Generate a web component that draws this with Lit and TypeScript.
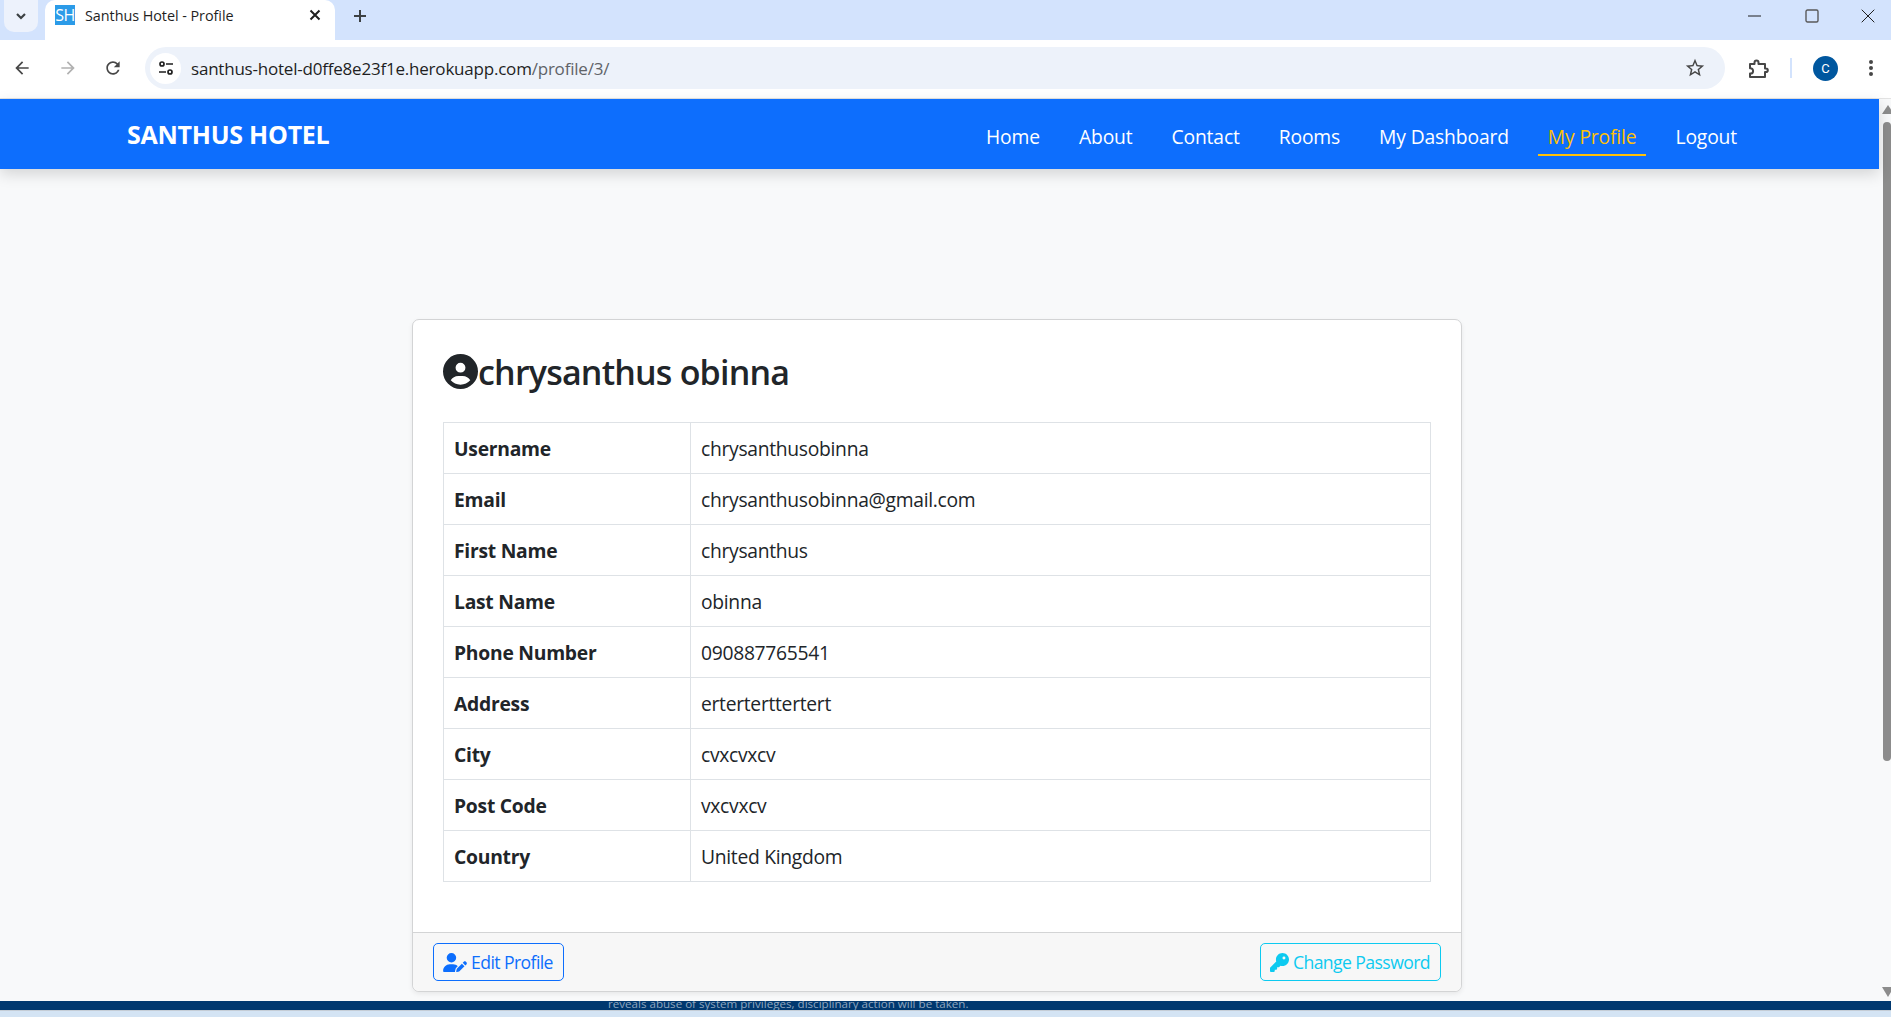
import { LitElement, css, html, svg } from "lit";
import { customElement } from "lit/decorators.js";

const icon = (viewBox: string, d: string, cls: string) =>
  html`<svg class=${cls} viewBox=${viewBox} fill="currentColor">${svg`<path d=${d}></path>`}</svg>`;

const ARROW = "M20 11H7.83l5.59-5.59L12 4l-8 8 8 8 1.41-1.41L7.83 13H20v-2z";
const RELOAD =
  "M17.65 6.35C16.2 4.9 14.21 4 12 4c-4.42 0-7.99 3.58-7.99 8s3.57 8 7.99 8c3.73 0 6.84-2.55 7.73-6h-2.08c-.82 2.33-3.04 4-5.65 4-3.31 0-6-2.69-6-6s2.69-6 6-6c1.66 0 3.14.69 4.22 1.78L13 11h7V4l-2.35 2.35z";
const STAR =
  "M22 9.24l-7.19-.62L12 2 9.19 8.63 2 9.24l5.46 4.73L5.82 21 12 17.27 18.18 21l-1.63-7.03L22 9.24zM12 15.4l-3.76 2.27 1-4.28-3.32-2.88 4.38-.38L12 6.1l1.71 4.04 4.38.38-3.32 2.88 1 4.28L12 15.4z";
const CIRCLE_USER =
  "M399 384.2C376.9 345.8 335.4 320 288 320H224c-47.4 0-88.9 25.8-111 64.2c35.2 39.2 86.2 63.8 143 63.8s107.8-24.7 143-63.8zM0 256a256 256 0 1 1 512 0A256 256 0 1 1 0 256zm256 16a72 72 0 1 0 0-144 72 72 0 1 0 0 144z";
const USER_PEN =
  "M224 256A128 128 0 1 0 224 0a128 128 0 1 0 0 256zm-45.7 48C79.8 304 0 383.8 0 482.3C0 498.7 13.3 512 29.7 512H322.8c-3.1-8.8-3.7-18.4-1.4-27.8l15-60.1c2.8-11.3 8.6-21.5 16.8-29.7l40.3-40.3c-32.1-31-75.7-50.1-123.9-50.1H178.3zm435.5-68.3c-15.6-15.6-40.9-15.6-56.6 0l-29.4 29.4 71 71 29.4-29.4c15.6-15.6 15.6-40.9 0-56.6l-14.4-14.4zM375.9 417c-4.1 4.1-7 9.2-8.4 14.9l-15 60.1c-1.4 5.5 .2 11.2 4.2 15.2s9.7 5.6 15.2 4.2l60.1-15c5.6-1.4 10.8-4.3 14.9-8.4L576.1 358.7l-71-71L375.9 417z";
const KEY =
  "M336 352c97.2 0 176-78.8 176-176S433.2 0 336 0S160 78.8 160 176c0 18.7 2.9 36.8 8.3 53.7L7 391c-4.5 4.5-7 10.6-7 17v80c0 13.3 10.7 24 24 24h80c13.3 0 24-10.7 24-24V448h40c13.3 0 24-10.7 24-24V384h40c6.4 0 12.5-2.5 17-7l33.3-33.3c16.9 5.4 35 8.3 53.7 8.3zM376 96a40 40 0 1 1 0 80 40 40 0 1 1 0-80z";

const NAV = ["Home", "About", "Contact", "Rooms", "My Dashboard", "My Profile", "Logout"];
const ROWS: [string, string][] = [
  ["Username", "chrysanthusobinna"],
  ["Email", "chrysanthusobinna@gmail.com"],
  ["First Name", "chrysanthus"],
  ["Last Name", "obinna"],
  ["Phone Number", "090887765541"],
  ["Address", "erterterttertert"],
  ["City", "cvxcvxcv"],
  ["Post Code", "vxcvxcv"],
  ["Country", "United Kingdom"],
];

@customElement("app-root")
export class AppRoot extends LitElement {
  static styles = css`
    :host {
      display: flex;
      flex-direction: column;
      height: 100vh;
      overflow: hidden;
      font-family: "Open Sans", "Noto Sans", sans-serif;
      color: #212529;
      background: #f8f9fa;
    }
    svg {
      display: block;
      flex: none;
    }

    /* browser chrome */
    .tabstrip {
      height: 40px;
      flex: none;
      display: flex;
      align-items: flex-start;
      background: #d3e3fd;
      color: #3c4043;
    }
    .tab-menu {
      width: 34px;
      height: 32px;
      margin-left: 4px;
      display: flex;
      align-items: center;
      justify-content: center;
      background: #edf2fc;
      border-radius: 0 0 10px 10px;
    }
    .tab-menu svg {
      width: 12px;
      height: 12px;
    }
    .tab {
      width: 290px;
      height: 40px;
      margin-left: 7px;
      padding: 0 14px 0 10px;
      box-sizing: border-box;
      display: flex;
      align-items: center;
      background: #fff;
      border-radius: 10px 10px 0 0;
    }
    .favicon {
      width: 20px;
      height: 20px;
      margin-bottom: 10px;
      margin-right: 10px;
      background: #2b9be8;
      color: #fff;
      font-size: 16px;
      line-height: 20px;
      text-align: center;
      letter-spacing: -0.6px;
    }
    .tab-title {
      flex: 1;
      font-size: 14.4px;
      letter-spacing: -0.05px;
      color: #1f1f1f;
      margin-bottom: 10px;
    }
    .tab-close {
      width: 12px;
      height: 12px;
      margin-bottom: 10px;
    }
    .new-tab {
      width: 14px;
      height: 14px;
      margin: 9px 0 0 18px;
    }
    .win {
      margin-left: auto;
      display: flex;
      align-items: center;
      gap: 42.5px;
      padding: 9px 16px 0 0;
    }
    .win svg {
      width: 14px;
      height: 14px;
    }

    .toolbar {
      height: 59px;
      flex: none;
      box-sizing: border-box;
      display: flex;
      align-items: center;
      padding: 0 0 2px 12px;
      background: #fff;
      color: #474747;
      border-bottom: 1px solid #e3e3e3;
    }
    .nav-btn {
      width: 20px;
      height: 20px;
      margin-right: 25.5px;
    }
    .nav-btn.off {
      color: #b1b1b1;
    }
    .omnibox {
      width: 1580px;
      height: 42px;
      margin-left: -3.5px;
      display: flex;
      align-items: center;
      background: #edf2fa;
      border-radius: 21px;
      padding: 0 19px 0 5px;
      box-sizing: border-box;
    }
    .tune {
      width: 31px;
      height: 31px;
      border-radius: 50%;
      background: #fff;
      display: flex;
      align-items: center;
      justify-content: center;
      margin-right: 10px;
      color: #1f1f1f;
    }
    .tune svg {
      width: 18px;
      height: 18px;
    }
    .url {
      flex: 1;
      font-size: 17px;
      letter-spacing: -0.21px;
      color: #1f1f1f;
      padding-top: 1px;
    }
    .url span {
      color: #5f6368;
    }
    .star {
      width: 22px;
      height: 22px;
    }
    .ext {
      width: 24px;
      height: 24px;
      margin-left: 21px;
    }
    .sep {
      width: 2px;
      height: 20px;
      margin: 0 21px 0 20px;
      background: #d3e3fd;
    }
    .avatar {
      width: 25px;
      height: 25px;
      border-radius: 50%;
      background: #00579f;
      color: #fff;
      font-family: "Roboto", sans-serif;
      font-size: 13px;
      line-height: 25px;
      text-align: center;
    }
    .dots {
      width: 20px;
      height: 20px;
      margin-left: 23px;
    }

    /* page */
    .viewport {
      flex: 1;
      min-height: 0;
      display: flex;
    }
    .page {
      flex: 1;
      min-width: 0;
    }
    .navbar {
      position: relative;
      height: 70px;
      box-sizing: border-box;
      display: flex;
      align-items: center;
      justify-content: space-between;
      padding: 0 132px 0 127px;
      background: #0d6efd;
      box-shadow: 0 5px 14px rgba(0, 0, 0, 0.15);
    }
    .brand {
      color: #fff;
      font-size: 25px;
      font-weight: 700;
      letter-spacing: -0.25px;
    }
    .menu {
      display: flex;
      gap: 19px;
      margin-top: 6px;
    }
    .menu a {
      color: #fff;
      font-size: 19.3px;
      letter-spacing: -0.15px;
      padding: 0 10px;
      height: 38px;
      line-height: 38px;
      box-sizing: border-box;
    }
    .menu a.active {
      color: #ffc107;
      border-bottom: 2px solid #ffc107;
    }

    .card {
      width: 1050px;
      box-sizing: border-box;
      margin: 150px 0 0 412px;
      background: #fff;
      border: 1px solid #d3d4d5;
      border-radius: 7px;
      box-shadow: 0 2px 5px rgba(0, 0, 0, 0.07);
    }
    .card-body {
      padding: 30px 30px 50px;
    }
    h2 {
      display: flex;
      align-items: center;
      height: 42px;
      margin: 0 0 30px;
      font-size: 34px;
      font-weight: 600;
      letter-spacing: -0.8px;
    }
    h2 svg {
      width: 35px;
      height: 35px;
    }
    h2 span {
      margin-top: 2px;
    }
    table {
      width: 100%;
      border-collapse: collapse;
      font-size: 19.3px;
    }
    th,
    td {
      height: 51px;
      box-sizing: border-box;
      padding: 0 10px;
      border: 1px solid #dee2e6;
      text-align: left;
      letter-spacing: -0.3px;
    }
    th {
      width: 247px;
      font-weight: 700;
      letter-spacing: -0.25px;
    }
    .card-footer {
      display: flex;
      justify-content: space-between;
      padding: 10px 20px;
      height: 59px;
      box-sizing: border-box;
      background: #f7f7f7;
      border-top: 1px solid #d3d4d5;
      border-radius: 0 0 7px 7px;
    }
    .btn {
      height: 38px;
      box-sizing: border-box;
      display: flex;
      align-items: center;
      gap: 4px;
      padding: 0 10px 0 9px;
      border: 1px solid currentColor;
      border-radius: 5px;
      font-size: 17.6px;
      letter-spacing: -0.58px;
    }
    .btn svg {
      width: 19px;
      height: 19px;
    }
    .btn.primary {
      color: #0d6efd;
    }
    .btn.primary svg {
      width: 24px;
    }
    .btn.info {
      color: #0dcaf0;
    }

    .scrollbar {
      width: 12px;
      flex: none;
      overflow: hidden;
      display: flex;
      flex-direction: column;
      align-items: flex-start;
      background: #f8f9fa;
    }
    .arrow-up {
      width: 0;
      height: 0;
      flex: none;
      margin: 6px 0 0 3px;
      border-left: 6px solid transparent;
      border-right: 6px solid transparent;
      border-bottom: 9px solid #8c8c8c;
    }
    .thumb {
      width: 8px;
      flex: none;
      margin: 8px 0 0 4px;
      height: 639px;
      background: #8c8c8c;
      border-radius: 4px;
    }
    .arrow-down {
      width: 0;
      height: 0;
      flex: none;
      margin: auto 0 4px 3px;
      border-left: 6px solid transparent;
      border-right: 6px solid transparent;
      border-top: 10px solid #8c8c8c;
    }

    .footer-strip {
      height: 9px;
      flex: none;
      overflow: hidden;
      background: #00386f;
      color: #8fa6bf;
      font-size: 11.6px;
      line-height: 6px;
      padding-left: 608px;
      white-space: nowrap;
    }
    .bottom {
      height: 7px;
      flex: none;
      background: #d4e4f4;
      border-top: 1px solid #c5cdd6;
      box-sizing: border-box;
    }
  `;

  render() {
    return html`
      <div class="tabstrip">
        <div class="tab-menu">
          <svg viewBox="0 0 12 12" fill="none" stroke="currentColor" stroke-width="2.2"><path d="M2 4l4 4 4-4"></path></svg>
        </div>
        <div class="tab">
          <div class="favicon">SH</div>
          <div class="tab-title">Santhus Hotel - Profile</div>
          <svg class="tab-close" viewBox="0 0 12 12" stroke="#1f1f1f" stroke-width="2"><path d="M1.5 1.5l9 9M10.5 1.5l-9 9"></path></svg>
        </div>
        <svg class="new-tab" viewBox="0 0 14 14" stroke="currentColor" stroke-width="2"><path d="M7 1v12M1 7h12"></path></svg>
        <div class="win">
          <svg viewBox="0 0 14 14" stroke="#1f1f1f" stroke-width="1"><path d="M0 7h13"></path></svg>
          <svg viewBox="0 0 14 14" fill="none" stroke="#5a5a5a" stroke-width="1.4"><rect x="1" y="1" width="12" height="12" rx="1.5"></rect></svg>
          <svg viewBox="0 0 14 14" stroke="#1f1f1f" stroke-width="1"><path d="M.7.7l12.6 12.6M13.3.7L.7 13.3"></path></svg>
        </div>
      </div>

      <div class="toolbar">
        ${icon("0 0 24 24", ARROW, "nav-btn")}
        <svg class="nav-btn off" viewBox="0 0 24 24" fill="currentColor" style="transform: scaleX(-1)"><path d=${ARROW}></path></svg>
        ${icon("0 0 24 24", RELOAD, "nav-btn")}
        <div class="omnibox">
          <div class="tune">
            <svg viewBox="0 0 18 18" fill="none" stroke="currentColor" stroke-width="1.7">
              <circle cx="5" cy="5" r="2"></circle>
              <path d="M9 5h7M2 13h7"></path>
              <circle cx="13" cy="13" r="2"></circle>
            </svg>
          </div>
          <div class="url">santhus-hotel-d0ffe8e23f1e.herokuapp.com<span>/profile/3/</span></div>
          ${icon("0 0 24 24", STAR, "star")}
        </div>
        <svg class="ext" viewBox="0 0 24 24" fill="none" stroke="currentColor" stroke-width="2" stroke-linejoin="round">
          <path d="M4 8h4.5V6.5a2 2 0 0 1 4 0V8H19v4.5h1a1.8 1.8 0 0 1 0 3.6h-1V21H4v-3.5h.5a2.6 2.6 0 0 0 0-5.2H4z"></path>
        </svg>
        <div class="sep"></div>
        <div class="avatar">C</div>
        <svg class="dots" viewBox="0 0 20 20" fill="currentColor">
          <circle cx="10" cy="4" r="2"></circle>
          <circle cx="10" cy="10" r="2"></circle>
          <circle cx="10" cy="16" r="2"></circle>
        </svg>
      </div>

      <div class="viewport">
        <div class="page">
          <div class="navbar">
            <div class="brand">SANTHUS HOTEL</div>
            <div class="menu">
              ${NAV.map((n) => html`<a class=${n === "My Profile" ? "active" : ""}>${n}</a>`)}
            </div>
          </div>
          <div class="card">
            <div class="card-body">
              <h2>${icon("0 0 512 512", CIRCLE_USER, "")}<span>chrysanthus obinna</span></h2>
              <table>
                ${ROWS.map(([k, v]) => html`<tr><th>${k}</th><td>${v}</td></tr>`)}
              </table>
            </div>
            <div class="card-footer">
              <a class="btn primary">${icon("0 0 640 512", USER_PEN, "")}Edit Profile</a>
              <a class="btn info">${icon("0 0 512 512", KEY, "")}Change Password</a>
            </div>
          </div>
        </div>
        <div class="scrollbar">
          <div class="arrow-up"></div>
          <div class="thumb"></div>
          <div class="arrow-down"></div>
        </div>
      </div>

      <div class="footer-strip">reveals abuse of system privileges, disciplinary action will be taken.</div>
      <div class="bottom"></div>
    `;
  }
}
